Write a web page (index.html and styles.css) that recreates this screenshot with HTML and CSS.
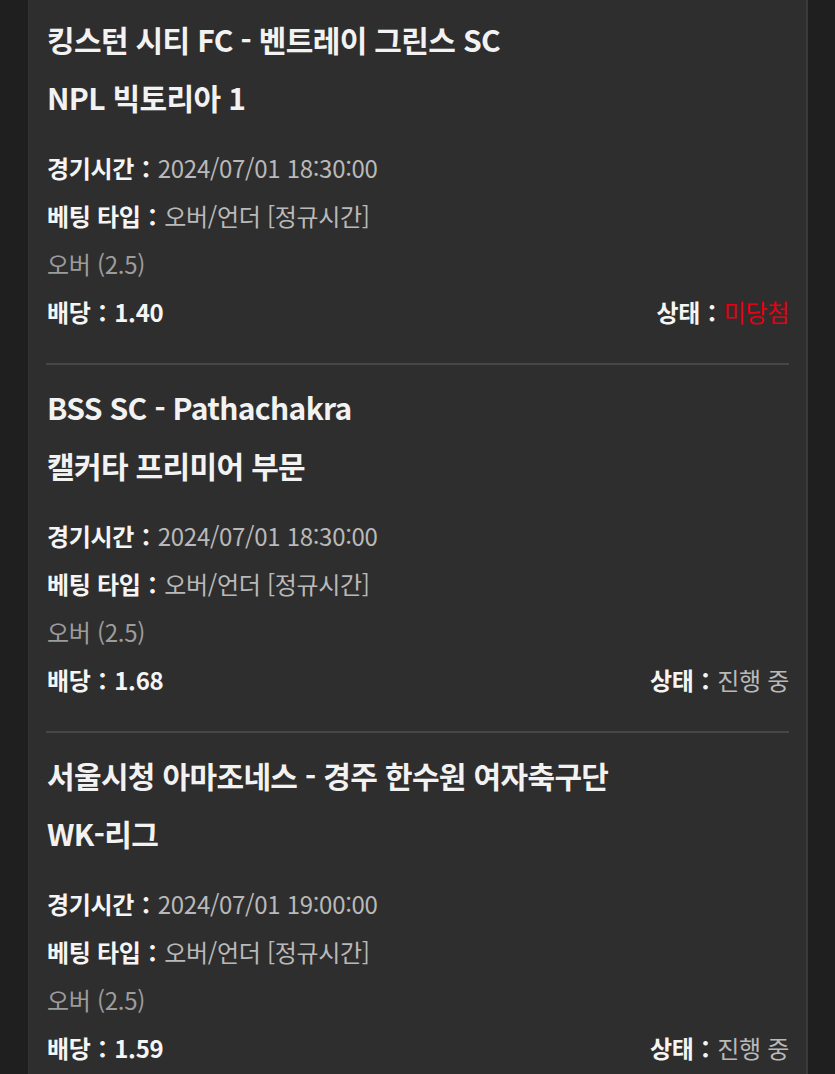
FILE: index.html
```html
<!doctype html>
<html lang="ko">
<head>
  <meta charset="UTF-8">
  <title>베팅 내역</title>
  <link rel="stylesheet" href="styles.css">
</head>
<body>
  <div class="panel">
    <div class="bet">
      <p class="match">킹스턴 시티 FC - 벤트레이 그린스 SC</p>
      <p class="league">NPL 빅토리아 1</p>
      <ul class="info">
        <li><b>경기시간：</b><span class="val">2024/07/01 18:30:00</span></li>
        <li><b>베팅 타입：</b><span class="val">오버/언더 [정규시간]</span></li>
        <li class="pick">오버 (2.5)</li>
        <li class="row"><span><b>배당：1.40</b></span><span><b>상태：</b><span class="lose">미당첨</span></span></li>
      </ul>
    </div>
    <div class="bet">
      <p class="match">BSS SC - Pathachakra</p>
      <p class="league">캘커타 프리미어 부문</p>
      <ul class="info">
        <li><b>경기시간：</b><span class="val">2024/07/01 18:30:00</span></li>
        <li><b>베팅 타입：</b><span class="val">오버/언더 [정규시간]</span></li>
        <li class="pick">오버 (2.5)</li>
        <li class="row"><span><b>배당：1.68</b></span><span><b>상태：</b><span class="val">진행 중</span></span></li>
      </ul>
    </div>
    <div class="bet">
      <p class="match">서울시청 아마조네스 - 경주 한수원 여자축구단</p>
      <p class="league">WK-리그</p>
      <ul class="info">
        <li><b>경기시간：</b><span class="val">2024/07/01 19:00:00</span></li>
        <li><b>베팅 타입：</b><span class="val">오버/언더 [정규시간]</span></li>
        <li class="pick">오버 (2.5)</li>
        <li class="row"><span><b>배당：1.59</b></span><span><b>상태：</b><span class="val">진행 중</span></span></li>
      </ul>
    </div>
  </div>
</body>
</html>
```

FILE: styles.css
```css
* {
  box-sizing: border-box;
}
html, body {
  margin: 0;
  background: #1f1f1f;
}
body {
  font-family: "Noto Sans CJK KR", "Noto Sans", sans-serif;
  color: #f2f2f2;
}
.panel {
  width: 780px;
  margin: -3px 0 0 28px;
  background: #2e2e2e;
  border-left: 1px solid #333;
  border-right: 2px solid #3a3a3a;
  padding: 0 17px 0 17px;
}
.bet {
  padding: 13px 0 27px 1px;
  border-bottom: 2px solid #474747;
}
.match, .league {
  margin: 0;
  font-size: 30px;
  font-weight: 700;
  line-height: 58px;
  letter-spacing: -0.65px;
}
.info {
  list-style: none;
  margin: 18px 0 0 0;
  padding: 0;
  font-size: 24px;
  letter-spacing: -0.3px;
}
.info li {
  line-height: 48px;
}
.info b {
  font-weight: 700;
  color: #f5f5f5;
}
.val {
  color: #b9b9b9;
}
.pick {
  color: #9c9c9c;
}
.row {
  display: flex;
  justify-content: space-between;
}
.lose {
  color: #e60012;
}
```
